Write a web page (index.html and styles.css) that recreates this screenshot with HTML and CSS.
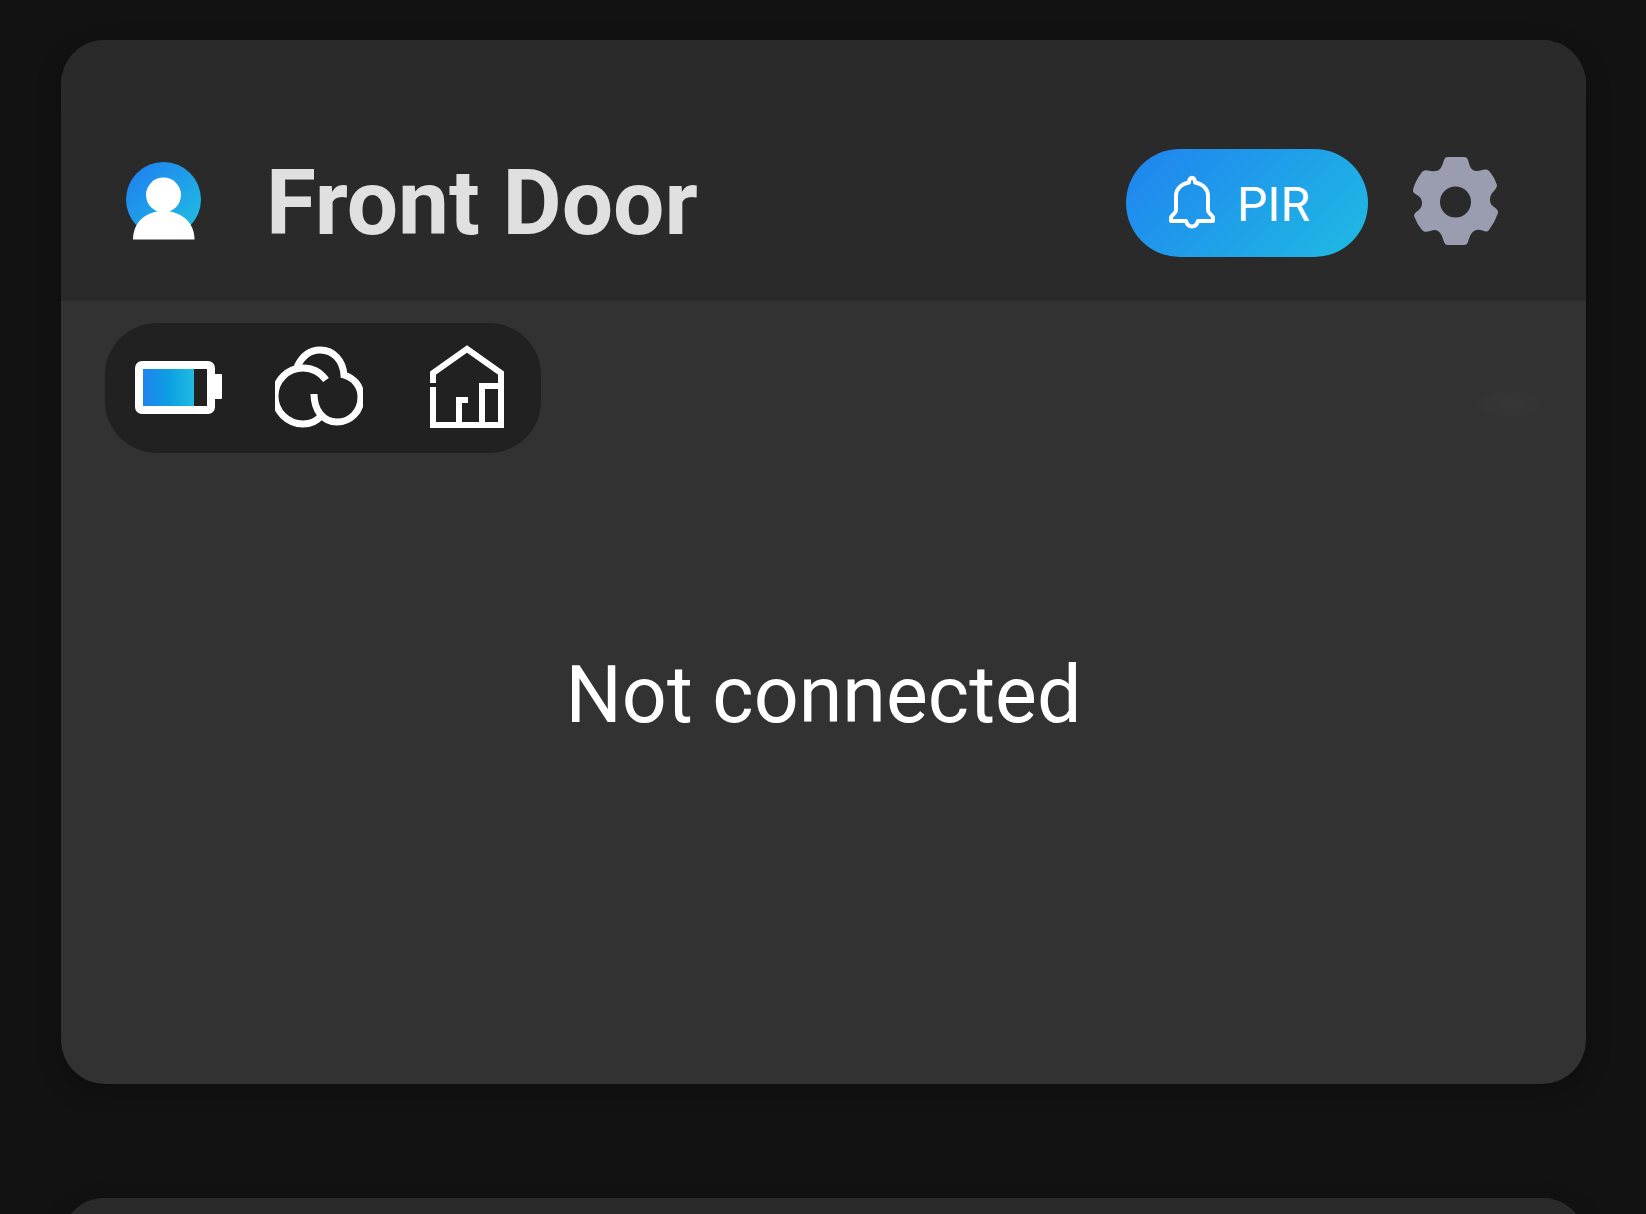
FILE: index.html
```
<!DOCTYPE html>
<html lang="en">
<head>
<meta charset="UTF-8">
<meta name="viewport" content="width=device-width, initial-scale=1">
<title>Cameras</title>
<link rel="stylesheet" href="styles.css">
</head>
<body>

<main class="cameras">
  <section class="card">
    <header class="card-header">
      <svg class="avatar" viewBox="0 0 76 84" aria-hidden="true">
        <defs>
          <linearGradient id="avatarFill" x1="0" y1="0" x2="1" y2="1">
            <stop offset="0.1" stop-color="#1f83f0"/>
            <stop offset="0.9" stop-color="#1fbbe2"/>
          </linearGradient>
        </defs>
        <circle cx="37.5" cy="38.5" r="37.5" fill="url(#avatarFill)"/>
        <circle cx="37.5" cy="34" r="17.5" fill="#fff"/>
        <path d="M7 78.500C7 62 19 50 37.500 50S68.500 62 68.500 78.500Z" fill="#fff"/>
      </svg>
      <h1 class="card-title">Front Door</h1>
      <button class="pir" type="button">
        <svg class="bell" viewBox="0 0 46 60" aria-hidden="true">
          <path d="M20 7.500C20 1 26 1 26 7.500C34 9 39 14 39 21V35C39 39 44 40 44 43V46H29C28 49.500 26 51.500 23 51.500S18 49.500 17 46H2V43C2 40 7 39 7 35V21C7 14 12 9 20 7.500Z"/>
        </svg>
        PIR
      </button>
      <button class="settings" type="button" aria-label="Settings">
        <svg class="gear" viewBox="0 0 86 92" aria-hidden="true">
          <path fill-rule="evenodd" d="M34 0H51Q54 0 55 3C57 10 58 14 64 14C69 14 73 10 77 15Q82 21 84 28C84 34 77 34 77 43C77 51 86 50 85 56Q82 65 76 73C73 77 69 72 64 73C58 74 57 79 55 85Q54 88 51 88H34Q32 88 31 85C29 79 28 74 22 73C17 73 13 77 9 73Q4 67 1 59C1 54 9 54 9 46C9 37-1 38 0 33Q2 24 9 15C13 11 16 15 22 14C28 14 29 9 31 3Q32 0 34 0ZM42.500 29.500A15 15 0 1 0 42.500 60.500A15 15 0 1 0 42.500 29.500Z"/>
        </svg>
      </button>
    </header>

    <div class="preview">
      <div class="badges">
        <svg class="battery" viewBox="0 0 88 54" aria-hidden="true">
          <defs>
            <linearGradient id="charge">
              <stop offset="0" stop-color="#1f83f0"/>
              <stop offset="0.5" stop-color="#0c9fe2"/>
              <stop offset="1" stop-color="#1fbbe2"/>
            </linearGradient>
          </defs>
          <rect x="4" y="4" width="72" height="45" rx="3" fill="none" stroke="#fff" stroke-width="8"/>
          <rect x="79" y="13" width="8" height="25" rx="1" fill="#fff"/>
          <rect x="8" y="8" width="51" height="37" fill="url(#charge)"/>
        </svg>
        <svg class="cloud" viewBox="0 0 88 84" aria-hidden="true">
          <path d="M51 34C46 27 38 22 28 22A28 28 0 1 0 28 78C35 78 41 76 46 70"/>
          <path d="M22 21C28 8 36 4 45 4C59 4 68 15 69 29C79 32 86 40 86 51C86 66 75 76 62 76C48 76 39 64 39 48"/>
        </svg>
        <svg class="house" viewBox="0 0 76 86" aria-hidden="true">
          <path d="M4 38V28L38 4L72 28V80H4V42M30 80V55H39M53 80V41H72"/>
        </svg>
      </div>
      <p class="status">Not connected</p>
    </div>
  </section>

  <section class="card">
    <header class="card-header"></header>
    <div class="preview"></div>
  </section>
</main>

</body>
</html>
```
FILE: styles.css
```
:root {
  --page-bg: #121212;
  --header-bg: #2a2a2a;
  --preview-bg: #323232;
  --badge-bg: #212121;
  --blue: #1f83f0;
  --cyan: #1fbbe2;
}
* {
  box-sizing: border-box;
}
body {
  margin: 0;
  background: var(--page-bg);
  color: #fff;
  font-family: Roboto, sans-serif;
}
.cameras {
  height: 100vh;
  overflow: hidden;
  padding: 40px 60px 0 61px;
}
.card {
  margin-bottom: 114px;
  border-radius: 44px;
  overflow: hidden;
  background: var(--preview-bg);
  box-shadow: 0 8px 24px rgba(0, 0, 0, 0.25);
}
.card-header {
  display: flex;
  align-items: center;
  min-height: 261px;
  padding: 64px 87px 0 65px;
  background: var(--header-bg);
}
.avatar {
  width: 76px;
  height: 84px;
}
.card-title {
  flex: 1;
  margin: 0 0 0 64px;
  color: #e0e0e0;
  font-size: 91px;
  font-weight: 700;
  line-height: 104px;
}
.pir {
  display: flex;
  align-items: center;
  gap: 22px;
  height: 108px;
  padding: 4px 58px 0 43px;
  border: 0;
  border-radius: 54px;
  background: linear-gradient(135deg, var(--blue), var(--cyan));
  color: #fff;
  font: 400 48px/56px Roboto, sans-serif;
  cursor: pointer;
}
.bell {
  width: 46px;
  height: 60px;
  fill: none;
  stroke: #fff;
  stroke-width: 4;
  stroke-linejoin: round;
}
.settings {
  margin-left: 45px;
  padding: 0;
  border: 0;
  background: none;
  cursor: pointer;
}
.gear {
  display: block;
  width: 86px;
  height: 92px;
  fill: #9a9cb0;
}
.preview {
  display: flex;
  flex-direction: column;
  align-items: flex-start;
  min-height: 783px;
  padding: 22px 44px;
  background: radial-gradient(ellipse 36px 16px at 95% 102px, #373737, transparent);
}
.badges {
  display: flex;
  align-items: center;
  height: 130px;
  padding: 0 36px 0 30px;
  border-radius: 52px;
  background: var(--badge-bg);
}
.battery {
  width: 88px;
  height: 54px;
}
.cloud {
  width: 88px;
  height: 84px;
  margin-left: 52px;
}
.house {
  width: 76px;
  height: 86px;
  margin-left: 66px;
}
.cloud,
.house {
  fill: none;
  stroke: #fff;
  stroke-width: 6;
}
.cloud {
  stroke-width: 7;
}
.status {
  align-self: center;
  margin: 194px 0 0;
  font-size: 79px;
  line-height: 96px;
}
```
